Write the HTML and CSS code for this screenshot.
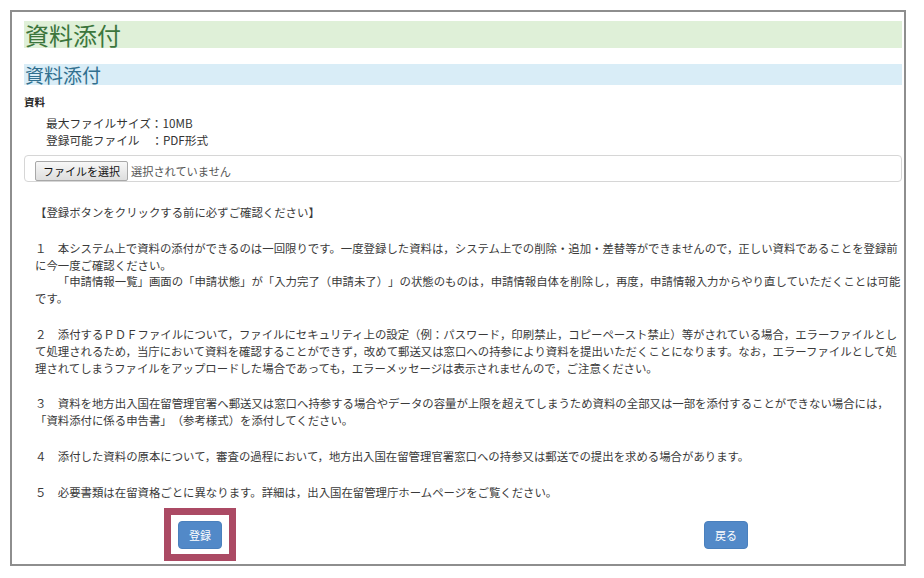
FILE: index.html
```html
<!DOCTYPE html>
<html lang="ja">
<head>
<meta charset="utf-8">
<title>資料添付</title>
<link rel="stylesheet" href="styles.css">
</head>
<body>
<div class="frame">
  <h1 class="h-green">資料添付</h1>
  <h2 class="h-blue">資料添付</h2>
  <div class="label">資料</div>
  <div class="spec">
    <div>最大ファイルサイズ：10MB</div>
    <div>登録可能ファイル　：PDF形式</div>
  </div>
  <div class="file">
    <span class="file-btn">ファイルを選択</span>
    <span class="file-name">選択されていません</span>
  </div>
  <div class="notes">
    <p>【登録ボタンをクリックする前に必ずご確認ください】</p>
    <p>１　本システム上で資料の添付ができるのは一回限りです。一度登録した資料は，システム上での削除・追加・差替等ができませんので，正しい資料であることを登録前<br>に今一度ご確認ください。<br>　　「申請情報一覧」画面の「申請状態」が「入力完了（申請未了）」の状態のものは，申請情報自体を削除し，再度，申請情報入力からやり直していただくことは可能<br>です。</p>
    <p>２　添付するＰＤＦファイルについて，ファイルにセキュリティ上の設定（例：パスワード，印刷禁止，コピーペースト禁止）等がされている場合，エラーファイルとし<br>て処理されるため，当庁において資料を確認することができず，改めて郵送又は窓口への持参により資料を提出いただくことになります。なお，エラーファイルとして処<br>理されてしまうファイルをアップロードした場合であっても，エラーメッセージは表示されませんので，ご注意ください。</p>
    <p>３　資料を地方出入国在留管理官署へ郵送又は窓口へ持参する場合やデータの容量が上限を超えてしまうため資料の全部又は一部を添付することができない場合には，<br>「資料添付に係る申告書」（参考様式）を添付してください。</p>
    <p>４　添付した資料の原本について，審査の過程において，地方出入国在留管理官署窓口への持参又は郵送での提出を求める場合があります。</p>
    <p>５　必要書類は在留資格ごとに異なります。詳細は，出入国在留管理庁ホームページをご覧ください。</p>
  </div>
  <div class="actions">
    <button class="btn btn-register">登録</button>
    <button class="btn btn-back">戻る</button>
  </div>
</div>
</body>
</html>
```

FILE: styles.css
```css
html, body {
  margin: 0;
  padding: 0;
  background: #ffffff;
}

body {
  font-family: "Noto Sans CJK JP", "Noto Sans", sans-serif;
  color: #333333;
}

.frame {
  position: relative;
  box-sizing: border-box;
  width: 896px;
  height: 556px;
  margin: 10px 0 0 10px;
  border: 2px solid #8e8e8e;
  padding: 9px 2px 0 12px;
}

.h-green {
  margin: 0;
  height: 27px;
  line-height: 27px;
  padding-left: 1px;
  background: #dff0d8;
  color: #3c763d;
  font-size: 24px;
  font-weight: normal;
}

.h-blue {
  margin: 16px 0 0 0;
  height: 21px;
  line-height: 21px;
  padding-left: 1px;
  background: #d9edf7;
  color: #31708f;
  font-size: 19px;
  font-weight: normal;
}

.label {
  margin-top: 9px;
  font-size: 10.5px;
  line-height: 15px;
  font-weight: bold;
  color: #222;
}

.spec {
  margin-top: 5px;
  padding-left: 22px;
  font-size: 11.7px;
  line-height: 17px;
  color: #333;
}

.file {
  box-sizing: border-box;
  margin-top: 7px;
  height: 27px;
  border: 1px solid #d6d6d6;
  border-radius: 4px;
  padding-left: 10px;
  display: flex;
  align-items: flex-end;
}

.file-btn {
  box-sizing: border-box;
  height: 20px;
  line-height: 18px;
  padding: 0 7px;
  border: 1px solid #a8a8a8;
  border-radius: 2px;
  background: linear-gradient(#f7f7f7, #dedede);
  font-size: 11px;
  color: #111;
}

.file-name {
  height: 20px;
  line-height: 20px;
  margin-left: 3px;
  font-size: 11.2px;
  color: #555;
}

.notes {
  margin-top: 22px;
  padding-left: 11px;
  font-size: 11.4px;
  line-height: 16.8px;
  color: #3a3a3a;
  white-space: nowrap;
  text-spacing-trim: space-all;
}

.notes p {
  margin: 0 0 19px 0;
}

.notes p:last-child {
  margin-bottom: 0;
}

.actions {
  display: flex;
  margin-top: 20px;
  padding-left: 154px;
}

.btn {
  position: relative;
  box-sizing: border-box;
  width: 44px;
  height: 28px;
  padding: 0;
  border: 1px solid #4a80bd;
  border-radius: 4px;
  background: #5289c8;
  color: #ffffff;
  font-family: "Noto Sans CJK JP", sans-serif;
  font-size: 11px;
}

.btn-back {
  margin-left: 482px;
}

.btn-register::after {
  content: "";
  position: absolute;
  top: -14px;
  bottom: -13px;
  left: -15px;
  right: -15px;
  border: 7px solid #ab4a64;
  box-shadow: 0 0 0 3px #ffffff;
}
```
